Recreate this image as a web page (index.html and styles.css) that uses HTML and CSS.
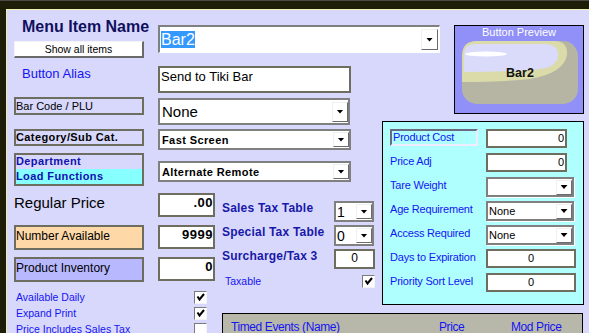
FILE: index.html
```html
<!DOCTYPE html>
<html lang="en">
<head>
    <meta charset="UTF-8">
    <title>Menu Item</title>
    <link rel="stylesheet" href="styles.css">
</head>
<body>
    <div class="form">
        <div class="top">
            <div class="top-labels">
                <div class="title">Menu Item Name</div>
                <div class="show-btn">Show all items</div>
                <div class="alias">Button Alias</div>
                <div class="lbox barcode">Bar Code / PLU</div>
            </div>
            <div class="top-fields">
                <div class="combo combo-big"><span class="val"><span class="sel">Bar2</span></span><span class="drop"></span></div>
                <div class="tb tb-alias">Send to Tiki Bar</div>
                <div class="combo combo-plu"><span class="val">None</span><span class="drop"></span></div>
            </div>
            <div class="preview">
                <div class="preview-title">Button Preview</div>
                <svg class="preview-btn" width="116" height="63" viewBox="0 0 116 63">
                    <rect width="116" height="63" rx="15" fill="#b6b5a3"/>
                    <path d="M0,41 V15 Q0,0 15,0 H92 Q106,0 105,14 Q102,32 68,38 Q40,41 0,41 Z" fill="#dbdbaa"/>
                    <path d="M2,31 V14 Q2,3 14,3 H82 Q97,3 96,15 Q95,26 78,28 Q40,31 2,31 Z" fill="#dadafa"/>
                    <ellipse cx="24" cy="13" rx="21" ry="2.5" fill="#ffffff"/>
                    <text class="preview-text" x="58" y="36" text-anchor="middle">Bar2</text>
                </svg>
            </div>
        </div>

        <div class="mid">
            <div class="mid-main">
                <div class="row row-cat">
                    <div class="lbox cat">Category/Sub Cat.</div>
                    <div class="combo combo-sm"><span class="val">Fast Screen</span><span class="drop"></span></div>
                </div>
                <div class="row row-dept">
                    <div class="lbox dept">
                        <div class="dept-top">Department</div>
                        <div class="dept-bot">Load Functions</div>
                    </div>
                    <div class="combo combo-sm combo-alt"><span class="val">Alternate Remote</span><span class="drop"></span></div>
                </div>
                <div class="prices">
                    <div class="price-grid">
                        <div class="reg-label">Regular Price</div>
                        <div class="tb num">.00</div>
                        <div class="lbox avail">Number Available</div>
                        <div class="tb num">9999</div>
                        <div class="lbox inv">Product Inventory</div>
                        <div class="tb num">0</div>
                    </div>
                    <div class="tax-grid">
                        <div class="tax-label">Sales Tax Table</div>
                        <div class="combo combo-tax"><span class="val">1</span><span class="drop"></span></div>
                        <div class="tax-label">Special Tax Table</div>
                        <div class="combo combo-tax"><span class="val">0</span><span class="drop"></span></div>
                        <div class="tax-label">Surcharge/Tax 3</div>
                        <div class="tb tb-sur">0</div>
                        <div class="taxable">Taxable</div>
                        <div class="check-cell"><span class="chk"><svg width="9" height="9" viewBox="0 0 9 9"><polyline points="1.5,3.5 3.5,6.5 8,1" /></svg></span></div>
                    </div>
                </div>
            </div>

            <div class="cyan">
                <div class="lbox3d">Product Cost</div>
                <div class="tb tb-cy">0</div>
                <div class="cy-label">Price Adj</div>
                <div class="tb tb-cy">0</div>
                <div class="cy-label">Tare Weight</div>
                <div class="combo combo-cy"><span class="val"></span><span class="drop"></span></div>
                <div class="cy-label">Age Requirement</div>
                <div class="combo combo-cy"><span class="val">None</span><span class="drop"></span></div>
                <div class="cy-label">Access Required</div>
                <div class="combo combo-cy"><span class="val">None</span><span class="drop"></span></div>
                <div class="cy-label">Days to Expiration</div>
                <div class="tb tb-cy-c">0</div>
                <div class="cy-label">Priority Sort Level</div>
                <div class="tb tb-cy-c">0</div>
            </div>
        </div>

        <div class="bottom">
            <div class="checks">
                <div class="check-row">
                    <span>Available Daily</span>
                    <span class="chk"><svg width="9" height="9" viewBox="0 0 9 9"><polyline points="1.5,3.5 3.5,6.5 8,1" /></svg></span>
                </div>
                <div class="check-row">
                    <span>Expand Print</span>
                    <span class="chk"><svg width="9" height="9" viewBox="0 0 9 9"><polyline points="1.5,3.5 3.5,6.5 8,1" /></svg></span>
                </div>
                <div class="check-row">
                    <span>Price Includes Sales Tax</span>
                    <span class="chk"></span>
                </div>
            </div>
            <div class="timed">
                <div class="timed-head">
                    <span>Timed Events (Name)</span>
                    <span>Price</span>
                    <span>Mod Price</span>
                </div>
            </div>
        </div>
    </div>
</body>
</html>
```

FILE: styles.css
```css
body {
    margin: 0;
    height: 333px;
    overflow: hidden;
    box-sizing: border-box;
    background-color: #1e1d07;
    border-top: 1px solid #4a4a44;
    padding: 8px 0 0 6px;
    font-family: "Liberation Sans", Arial, sans-serif;
}
.form {
    height: 100%;
    box-sizing: border-box;
    background-color: #d8d8fc;
    border-top: 1px solid #eeeeb0;
    border-left: 1px solid #eeeeb0;
    padding-top: 7px;
}

/* shared controls */
.lbox {
    box-sizing: border-box;
    border: 2px solid #6e6e60;
    font-size: 11px;
    line-height: 12px;
    color: #000;
    white-space: nowrap;
}
.tb {
    box-sizing: border-box;
    background-color: #fff;
    border: 2px solid #6e6e60;
    white-space: nowrap;
}
.combo {
    box-sizing: border-box;
    display: flex;
    align-items: center;
    background-color: #fff;
    border: 2px solid #808080;
}
.combo .val {
    flex: 1;
    padding-left: 1px;
    white-space: nowrap;
    overflow: hidden;
}
.drop {
    box-sizing: border-box;
    width: 16px;
    height: 15px;
    display: flex;
    align-items: center;
    justify-content: center;
    background-color: #fff;
    border: 1px solid;
    border-color: #f0f0f0 #6a6a6a #6a6a6a #f0f0f0;
}
.drop::after {
    content: "";
    width: 7px;
    height: 4px;
    background-color: #000;
    clip-path: polygon(0 0, 100% 0, 50% 100%);
}
.chk {
    box-sizing: border-box;
    width: 13px;
    height: 13px;
    display: flex;
    align-items: center;
    justify-content: center;
    background-color: #fff;
    border: 1px solid;
    border-color: #7a7a7a #f4f4f4 #f4f4f4 #7a7a7a;
}
.chk polyline {
    fill: none;
    stroke: #000;
    stroke-width: 2;
}

/* top band */
.top {
    display: flex;
    align-items: flex-start;
    height: 104px;
    padding-left: 7px;
}
.top-labels {
    width: 130px;
}
.title {
    margin-top: 1px;
    padding-left: 8px;
    font-size: 16px;
    font-weight: bold;
    line-height: 18px;
    color: #10105e;
    white-space: nowrap;
}
.show-btn {
    box-sizing: border-box;
    height: 17px;
    margin-top: 5px;
    background-color: #fff;
    border-style: solid;
    border-width: 1px 2px 2px 1px;
    border-color: #f4f4f4 #6a6a6a #6a6a6a #f4f4f4;
    font-size: 10.5px;
    line-height: 14px;
    text-align: center;
}
.alias {
    margin-top: 8px;
    padding-left: 8px;
    font-size: 13px;
    line-height: 15px;
    color: #1414f4;
}
.barcode {
    height: 18px;
    margin-top: 16px;
    padding: 1px 0 0 0;
}
.top-fields {
    width: 282px;
    margin-left: 14px;
}
.combo-big {
    height: 28px;
    margin-top: 8px;
    border-width: 2px 1px 1px 2px;
    border-color: #808080 #fff #fff #808080;
    font-size: 16px;
}
.combo-big .val {
    padding-left: 1px;
}
.combo-big .sel {
    background-color: #3399ff;
    color: #fff;
}
.combo-big .drop {
    width: 17px;
    height: 21px;
    margin-right: 1px;
}
.tb-alias {
    width: 193px;
    height: 27px;
    margin-top: 13px;
    padding: 1px 0 0 1px;
    font-size: 13px;
    line-height: 15px;
}
.combo-plu {
    width: 192px;
    height: 27px;
    margin-top: 5px;
    font-size: 15px;
}
.combo-plu .val {
    padding-left: 2px;
}
.combo-plu .drop {
    height: 20px;
}
.preview {
    box-sizing: border-box;
    width: 130px;
    height: 89px;
    margin-top: 8px;
    margin-left: 14px;
    background-color: #9090f8;
    border: 1px solid #000;
}
.preview-title {
    font-size: 11px;
    line-height: 12px;
    color: #fff;
    text-align: center;
}
.preview-btn {
    display: block;
    margin: 3px 0 0 7px;
}
.preview-text {
    font-family: "Liberation Sans", Arial, sans-serif;
    font-size: 12.5px;
    font-weight: bold;
    fill: #111;
}

/* middle band */
.mid {
    display: flex;
    align-items: flex-start;
    height: 168px;
}
.mid-main {
    width: 361px;
    margin-left: 7px;
}
.row {
    display: flex;
    align-items: flex-start;
}
.row .lbox {
    width: 130px;
}
.row .combo-sm {
    margin-left: 14px;
}
.row-cat {
    margin-top: 8px;
}
.row-dept {
    margin-top: 3px;
}
.cat {
    height: 17px;
    font-weight: bold;
    letter-spacing: 0.4px;
}
.combo-sm {
    width: 193px;
    height: 21px;
    font-size: 11px;
    font-weight: bold;
    letter-spacing: 0.4px;
}
.combo-sm .val {
    padding-left: 2px;
}
.combo-alt {
    margin-top: 8px;
}
.dept {
    height: 33px;
    font-weight: bold;
    letter-spacing: 0.4px;
    color: #1010b0;
}
.dept-top {
    height: 14px;
}
.dept-bot {
    height: 15px;
    padding-top: 1px;
    box-sizing: border-box;
    background-color: #88ffff;
}

.prices {
    display: flex;
    align-items: flex-start;
    margin-top: 7px;
}
.price-grid {
    display: grid;
    grid-template-columns: 130px 57px;
    grid-auto-rows: 25px;
    column-gap: 14px;
    row-gap: 7px;
}
.reg-label {
    padding-top: 1px;
    font-size: 15px;
    line-height: 17px;
    color: #000;
}
.num {
    height: 24px;
    padding-top: 1px;
    font-size: 13px;
    font-weight: bold;
    letter-spacing: 0.5px;
    line-height: 14px;
    text-align: right;
}
.avail, .inv {
    height: 25px;
    padding-top: 2px;
    font-size: 12px;
    line-height: 15px;
}
.avail {
    background-color: #ffd8a8;
}
.inv {
    background-color: #b8b8ff;
}

.tax-grid {
    display: grid;
    grid-template-columns: 112px 41px;
    grid-auto-rows: 21px;
    row-gap: 3px;
    margin-top: 8px;
    margin-left: 7px;
}
.tax-label {
    font-size: 12px;
    font-weight: bold;
    letter-spacing: 0.2px;
    line-height: 14px;
    color: #1818a8;
    white-space: nowrap;
}
.combo-tax {
    width: 40px;
    height: 21px;
    font-size: 14px;
}
.combo-tax .val {
    padding-left: 1px;
}
.tb-sur {
    width: 41px;
    height: 20px;
    font-size: 12px;
    line-height: 15px;
    text-align: center;
}
.taxable {
    padding: 2px 0 0 3px;
    font-size: 10.5px;
    line-height: 12px;
    color: #1414f4;
}
.check-cell .chk {
    margin: 2px 0 0 28px;
}

/* cyan panel */
.cyan {
    box-sizing: border-box;
    width: 202px;
    height: 184px;
    flex-shrink: 0;
    margin-left: 7px;
    padding: 7px 0 0 7px;
    background-color: #b0ffff;
    border: 1px solid #000;
    display: grid;
    grid-template-columns: 96px auto;
    grid-auto-rows: 19px;
    row-gap: 5px;
    align-items: start;
}
.cy-label {
    padding-top: 2px;
    font-size: 11px;
    letter-spacing: -0.2px;
    line-height: 12px;
    color: #1414f4;
    white-space: nowrap;
}
.lbox3d {
    box-sizing: border-box;
    width: 88px;
    height: 17px;
    padding-left: 1px;
    border: 2px solid;
    border-color: #6a6a80 #eeeeff #eeeeff #6a6a80;
    font-size: 11px;
    letter-spacing: -0.2px;
    line-height: 12px;
    color: #1414f4;
}
.tb-cy, .tb-cy-c {
    height: 19px;
    font-size: 11px;
    line-height: 14px;
}
.tb-cy {
    width: 81px;
    padding-right: 1px;
    text-align: right;
}
.tb-cy-c {
    width: 90px;
    text-align: center;
}
.combo-cy {
    width: 88px;
    height: 20px;
    font-size: 11px;
    box-shadow: 1px 1px 0 #fff;
}
.combo-cy .val {
    padding-left: 1px;
}

/* bottom band */
.bottom {
    display: flex;
    align-items: flex-start;
    padding-left: 7px;
}
.checks {
    width: 193px;
    padding-top: 2px;
}
.check-row {
    display: flex;
    justify-content: space-between;
    height: 16px;
    padding-left: 2px;
    font-size: 10.5px;
    line-height: 13px;
    color: #1414f4;
}
.timed {
    box-sizing: border-box;
    width: 361px;
    height: 60px;
    margin: 24px 0 0 15px;
    background-color: #b8b8aa;
    border: 1px solid #000;
}
.timed-head {
    display: grid;
    grid-template-columns: 208px 72px 1fr;
    padding: 6px 0 0 8px;
    font-size: 12px;
    letter-spacing: -0.4px;
    line-height: 15px;
    color: #1414f4;
}
```
